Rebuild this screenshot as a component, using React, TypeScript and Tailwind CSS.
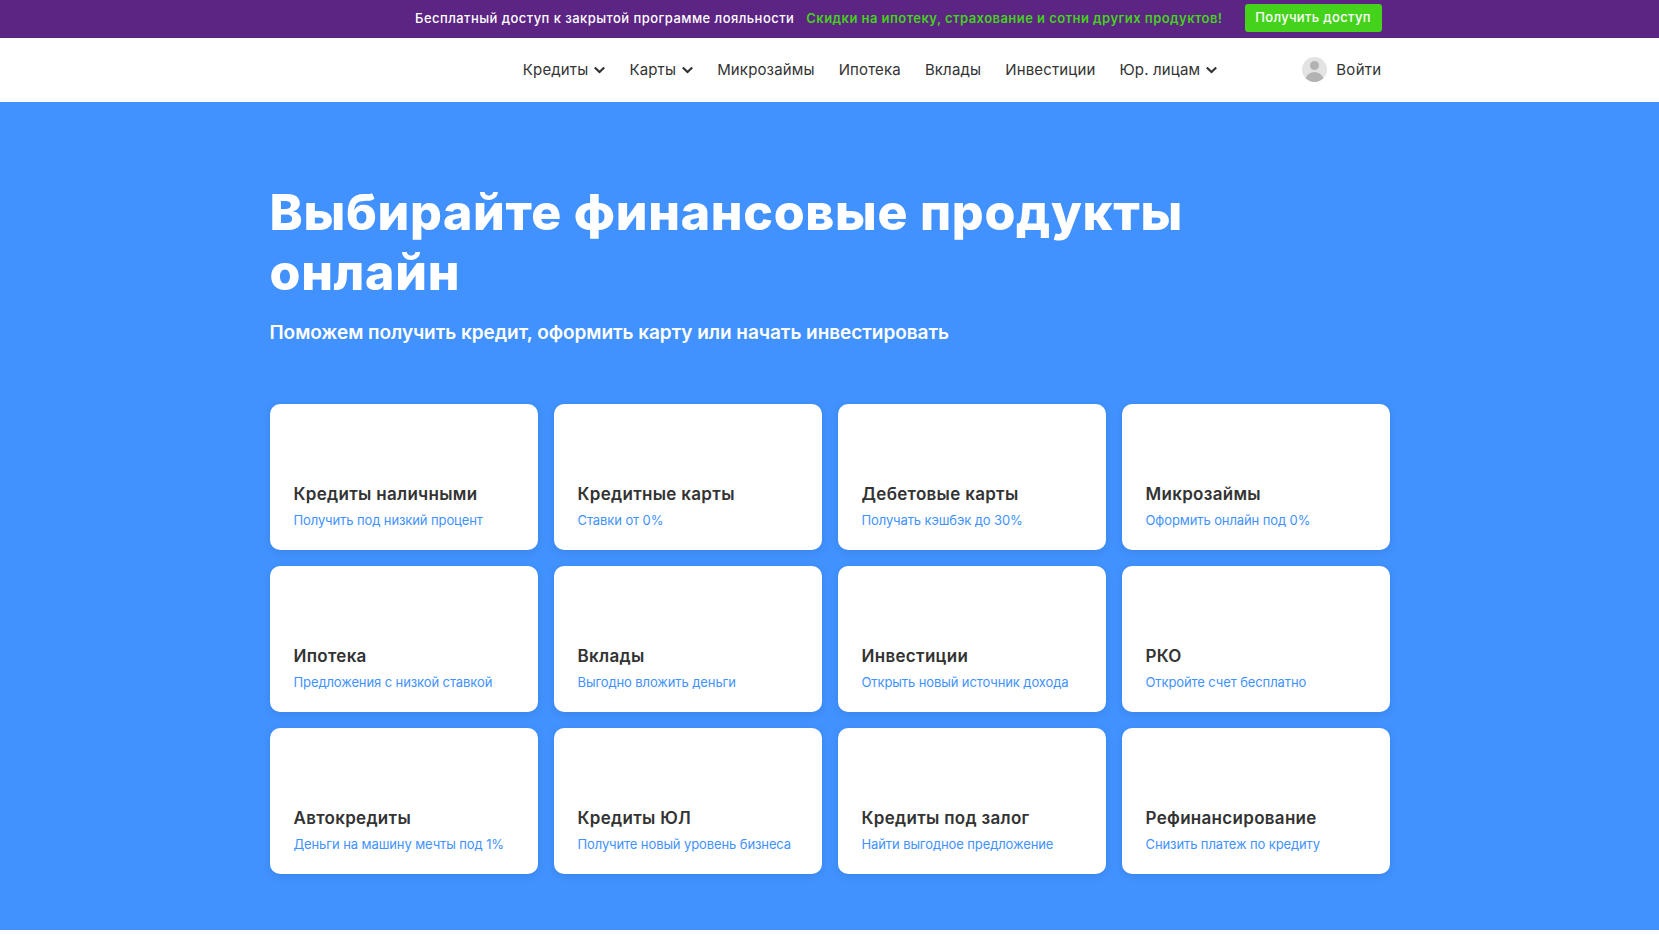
const navItems = [
  { label: "Кредиты", arrow: true },
  { label: "Карты", arrow: true },
  { label: "Микрозаймы", arrow: false },
  { label: "Ипотека", arrow: false },
  { label: "Вклады", arrow: false },
  { label: "Инвестиции", arrow: false },
  { label: "Юр. лицам", arrow: true },
];

const products = [
  { title: "Кредиты наличными", text: "Получить под низкий процент" },
  { title: "Кредитные карты", text: "Ставки от 0%" },
  { title: "Дебетовые карты", text: "Получать кэшбэк до 30%" },
  { title: "Микрозаймы", text: "Оформить онлайн под 0%" },
  { title: "Ипотека", text: "Предложения с низкой ставкой" },
  { title: "Вклады", text: "Выгодно вложить деньги" },
  { title: "Инвестиции", text: "Открыть новый источник дохода" },
  { title: "РКО", text: "Откройте счет бесплатно" },
  { title: "Автокредиты", text: "Деньги на машину мечты под 1%" },
  { title: "Кредиты ЮЛ", text: "Получите новый уровень бизнеса" },
  { title: "Кредиты под залог", text: "Найти выгодное предложение" },
  { title: "Рефинансирование", text: "Снизить платеж по кредиту" },
];

export default function App() {
  return (
    <div className="min-h-[936px] bg-white font-['Inter',sans-serif]">
      {/* Promo bar */}
      <div className="h-[38px] bg-[#5c2483]">
        <div className="mx-auto flex h-full w-[1120px] items-center justify-end pr-2">
          <span className="text-[13px] font-medium tracking-[0.45px] text-white">
            Бесплатный доступ к закрытой программе лояльности
          </span>
          <span className="ml-3 text-[13px] font-semibold tracking-[0.45px] text-[#44d21b]">
            Скидки на ипотеку, страхование и сотни других продуктов!
          </span>
          <button className="ml-[22px] -mt-[2px] h-[28px] w-[137px] rounded-[3px] bg-[#44d21b] text-[13px] font-medium tracking-[0.35px] text-white">
            Получить доступ
          </button>
        </div>
      </div>

      {/* Header */}
      <header className="h-[64px]">
        <div className="mx-auto flex h-full w-[1120px] items-center justify-end pr-2">
          <nav className="flex items-center gap-6">
            {navItems.map((item) => (
              <a key={item.label} className="flex items-center text-[15px] tracking-[0.15px] text-[#333333]">
                {item.label}
                {item.arrow && (
                  <svg className="ml-[6px] -mt-[1px] h-[8px] w-[11px]" viewBox="0 0 11 8" fill="none">
                    <path d="M0.8 1.5 L5.5 6 L10.2 1.5" stroke="#333333" strokeWidth="2.2" />
                  </svg>
                )}
              </a>
            ))}
          </nav>
          <div className="ml-[85px] flex items-center gap-[9px]">
            <div className="relative -mt-[2px] h-[25px] w-[25px] overflow-hidden rounded-full bg-[#e3e3e3]">
              <div className="absolute left-[8px] top-[4px] h-[9px] w-[9px] rounded-full bg-[#b3b3b3]" />
              <div className="absolute left-[3px] top-[15px] h-[19px] w-[19px] rounded-full bg-[#b3b3b3]" />
            </div>
            <span className="text-[15px] tracking-[0.3px] text-[#333333]">Войти</span>
          </div>
        </div>
      </header>

      {/* Hero */}
      <section className="bg-[#4192ff] pb-[56px] pt-[80px]">
        <div className="mx-auto w-[1120px]">
          <h1 className="w-[1000px] text-[50px] font-extrabold leading-[60px] tracking-[0.7px] text-white">
            Выбирайте финансовые продукты онлайн
          </h1>
          <p className="mt-[17px] text-[19px] font-semibold leading-[28px] tracking-[-0.05px] text-white">
            Поможем получить кредит, оформить карту или начать инвестировать
          </p>

          <div className="mt-[57px] grid grid-cols-4 gap-4">
            {products.map((p) => (
              <a
                key={p.title}
                className="flex h-[146px] flex-col justify-end rounded-[10px] bg-white px-6 pb-[20px] shadow-[0_2px_8px_rgba(0,0,0,0.1)]"
              >
                <h3 className="text-[17px] font-semibold leading-6 tracking-[0.3px] text-[#333333]">{p.title}</h3>
                <p className="mt-[4px] text-[13px] leading-5 tracking-[-0.1px] text-[#4192ff]">{p.text}</p>
              </a>
            ))}
          </div>
        </div>
      </section>
    </div>
  );
}
